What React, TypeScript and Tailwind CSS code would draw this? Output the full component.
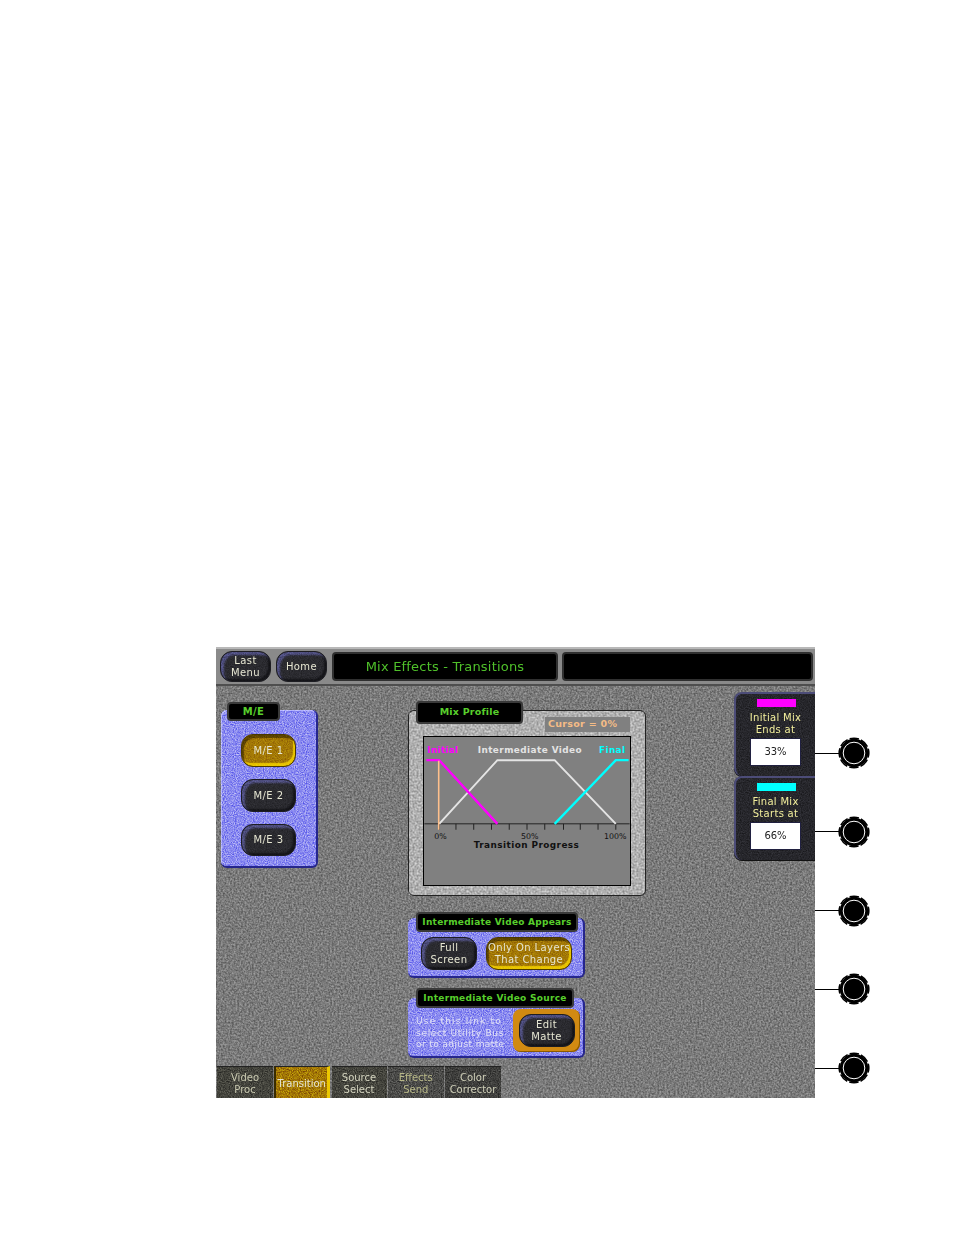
import React from "react";

function Noise({ id, freq = 0.9, o = "opacity-40" }: { id: string; freq?: number; o?: string }) {
  return (
    <svg className={`absolute inset-0 w-full h-full pointer-events-none mix-blend-overlay ${o}`} aria-hidden="true">
      <filter id={id} x="0" y="0" width="100%" height="100%" colorInterpolationFilters="sRGB">
        <feTurbulence type="fractalNoise" baseFrequency={freq} numOctaves={2} seed={3} />
        <feColorMatrix type="matrix" values="1.6 0 0 0 -0.3 1.6 0 0 0 -0.3 1.6 0 0 0 -0.3 0 0 0 0 1" />
      </filter>
      <rect width="100%" height="100%" filter={`url(#${id})`} />
    </svg>
  );
}

function Btn({ lines, gold, cls }: { lines: string[]; gold?: boolean; cls: string }) {
  const look = gold
    ? "bg-[#a27706] shadow-[inset_2px_3px_1px_#5c4300,inset_-2px_-3px_1px_#e8c400] border-[#4a3800]"
    : "bg-[#2a2a2f] shadow-[inset_3px_3px_2px_#4f4f80,inset_-2px_-2px_2px_#141418] border-[#1d1d22]";
  return (
    <div className={`relative flex flex-col items-center justify-center rounded-xl border text-[10px] leading-[12px] tracking-[0.4px] text-[#e6e6d2] overflow-hidden ${look} ${cls}`}>
      <Noise id={gold ? "ng" : "nb"} o="opacity-25" />
      {lines.map((l) => (
        <span key={l} className="relative whitespace-nowrap">{l}</span>
      ))}
    </div>
  );
}

function Plate({ text, cls }: { text: string; cls: string }) {
  return (
    <div className={`absolute z-10 flex items-center justify-center rounded bg-black border-2 border-[#3a3a3a] font-bold text-[#58cf2c] whitespace-nowrap ${cls}`}>
      {text}
    </div>
  );
}

function Knob() {
  return (
    <div className="flex items-center h-8">
      <div className="w-[25px] h-px bg-black" />
      <svg viewBox="0 0 32 32" className="w-8 h-8 -ml-[2px]" aria-hidden="true">
        <circle cx="16" cy="16" r="14.2" fill="#000" />
        <circle cx="16" cy="16" r="14.8" fill="none" stroke="#000" strokeWidth="1.6" strokeDasharray="9.4 2.2" strokeDashoffset="4.7" />
        <circle cx="16" cy="16" r="10.8" fill="none" stroke="#fff" strokeWidth="1" />
      </svg>
    </div>
  );
}

function Side({ bar, lines, value, id }: { bar: string; lines: string[]; value: string; id: string }) {
  return (
    <div className="relative w-[81px] h-[84px] bg-[#26262b] rounded-l-lg border-l-2 border-t-2 border-[#4c4c78] shadow-[0_1px_0_#111] overflow-hidden">
      <Noise id={id} o="opacity-40" />
      <div className={`relative mt-[5px] ml-[21px] w-[39px] h-2 ${bar}`} />
      <div className="relative mt-[5px] text-center text-[10px] leading-[12px] tracking-[0.3px] text-[#f2ee9c]">
        {lines.map((l) => <div key={l}>{l}</div>)}
      </div>
      <div className="relative mt-[2px] ml-[14px] w-[51px] h-[28px] bg-white border border-[#202040] flex items-center justify-center pb-px text-[10px] text-[#222]">
        {value}
      </div>
    </div>
  );
}

function Chart() {
  const ticks = [15, 32, 50, 68, 86, 104, 122, 141, 158, 176, 194];
  return (
    <svg viewBox="0 0 208 150" className="block w-[208px] h-[150px] bg-[#808080] border border-black" style={{ fontFamily: "'DejaVu Sans', sans-serif" }}>
      <line x1="0" y1="88" x2="208" y2="88" stroke="#222" strokeWidth="1" />
      {ticks.map((t) => <line key={t} x1={t} y1="88" x2={t} y2="94" stroke="#222" strokeWidth="1" />)}
      <polyline points="15,88 74,23.5 132,23.5 194,88" fill="none" stroke="#e4e4e4" strokeWidth="2" />
      <polyline points="2,23.5 15,23.5 74,88" fill="none" stroke="#ff00ff" strokeWidth="2.4" />
      <polyline points="132,88 194,23.5 207,23.5" fill="none" stroke="#00ffff" strokeWidth="2.4" />
      <line x1="14.5" y1="24" x2="14.5" y2="94" stroke="#ffc08c" strokeWidth="1.6" />
      <text x="3" y="16" fontSize="9" fontWeight="700" fill="#ff00ff" letterSpacing="0.3">Initial</text>
      <text x="54" y="16" fontSize="9" fontWeight="700" fill="#e4e4e4" letterSpacing="0.45">Intermediate Video</text>
      <text x="177" y="16" fontSize="9" fontWeight="700" fill="#00ffff" letterSpacing="0.4">Final</text>
      <text x="10" y="103" fontSize="8" fill="#111">0%</text>
      <text x="98" y="103" fontSize="8" fill="#111">50%</text>
      <text x="182" y="103" fontSize="8" fill="#111">100%</text>
      <text x="50" y="113" fontSize="9" fontWeight="700" fill="#111" letterSpacing="0.45">Transition Progress</text>
    </svg>
  );
}

const tabs = [
  { l: ["Video", "Proc"], w: "w-[56px]", c: "text-[#c9c9b0] bg-[#43433c]" },
  { l: ["Transition"], w: "w-[56px]", c: "text-[#e6e6d2] bg-[#a27706] border-r-[3px] border-r-[#ecc800] border-l-2 border-l-[#3a2c00]" },
  { l: ["Source", "Select"], w: "w-[55px]", c: "text-[#d5d5c0] bg-[#43433c]" },
  { l: ["Effects", "Send"], w: "w-[56px]", c: "text-[#b8b888] bg-[#4a4a48]" },
  { l: ["Color", "Corrector"], w: "w-[56px]", c: "text-[#cfcfb8] bg-[#3e3e3c]" },
];

export default function App() {
  return (
    <div className="min-h-[1235px] bg-white pt-[647px] pl-[216px] flex items-start font-['DejaVu_Sans',sans-serif]">
      <div className="w-[599px] h-[451px] flex flex-col overflow-hidden bg-[#7a7a7a]">
        {/* header */}
        <div className="relative h-[39px] bg-[#8a8a8a] border-t-2 border-[#b8b8b8] border-b-2 border-b-[#4e4e4e] flex items-start pl-1 pt-[2px] gap-[5px] shrink-0">
          <Btn lines={["Last", "Menu"]} cls="w-[51px] h-[31px]" />
          <Btn lines={["Home"]} cls="w-[51px] h-[31px]" />
          <div className="w-[226px] h-[29px] ml-0 mt-px rounded bg-black border-2 border-[#303030] flex items-center justify-center text-[13px] tracking-[0.2px] text-[#4fc02a]">
            Mix Effects - Transitions
          </div>
          <div className="w-[251px] h-[29px] -ml-px mt-px rounded bg-black border-2 border-[#303030]" />
        </div>

        {/* body */}
        <div className="relative flex-1 flex flex-col">
          <Noise id="nbody" freq={0.55} o="opacity-30" />
          <div className="relative h-[378px] flex items-start pl-[5px]">
            {/* M/E */}
            <div className="relative mt-[24px] w-[97px] h-[158px] rounded-md bg-[#8a8af0] border-r-2 border-b-2 border-[#26268c] shadow-[inset_1px_1px_0_#b8b8ff]">
              <Noise id="n1" o="opacity-50" />
              <Plate text="M/E" cls="-top-2 left-[6px] w-[53px] h-[19px] text-[10px] tracking-[0.4px]" />
              <div className="relative pt-[24px] pl-[20px] flex flex-col gap-3">
                <Btn lines={["M/E 1"]} gold cls="w-[55px] h-[33px]" />
                <Btn lines={["M/E 2"]} cls="w-[55px] h-[33px]" />
                <Btn lines={["M/E 3"]} cls="w-[55px] h-[32px]" />
              </div>
            </div>

            {/* centre */}
            <div className="ml-[90px] w-[238px] flex flex-col">
              <div className="relative mt-[24px] h-[186px] rounded-md bg-[#b0b0b0] border border-[#222] pl-[14px] pt-[6px]">
                <Noise id="n2" freq={0.5} o="opacity-50" />
                <Plate text="Mix Profile" cls="-top-[10px] left-[7px] w-[107px] h-[23px] text-[9.5px] tracking-[0.2px]" />
                <div className="relative ml-[122px] w-[85px] h-[15px] bg-[#808080] flex items-center justify-start pl-[3px] text-[9.5px] font-bold tracking-[0.3px] text-[#f4bc86]">
                  Cursor = 0%
                </div>
                <div className="relative mt-[4px]"><Chart /></div>
              </div>

              <div className="relative mt-[22px] w-[177px] h-[60px] rounded-md bg-[#8a8af0] border-r-2 border-b-2 border-[#26268c]">
                <Noise id="n3" o="opacity-50" />
                <Plate text="Intermediate Video Appears" cls="-top-[6px] left-[8px] w-[162px] h-[20px] pt-[2px] text-[9px] tracking-[0.25px]" />
                <div className="relative pt-[19px] pl-[13px] flex gap-[9px]">
                  <Btn lines={["Full", "Screen"]} cls="w-[56px] h-[33px]" />
                  <Btn lines={["Only On Layers", "That Change"]} gold cls="w-[86px] h-[33px]" />
                </div>
              </div>

              <div className="relative mt-[20px] w-[177px] h-[60px] rounded-md bg-[#8a8af0] border-r-2 border-b-2 border-[#26268c]">
                <Noise id="n4" o="opacity-50" />
                <Plate text="Intermediate Video Source" cls="-top-[10px] left-[8px] w-[158px] h-[20px] pt-[2px] text-[9px] tracking-[0.3px]" />
                <div className="relative flex items-start pl-2 pt-[12px]">
                  <div className="w-[92px] text-[9px] leading-[11.7px] text-[#e2e2f6] whitespace-nowrap pt-[6px]">
                    <div className="tracking-[1.2px]">Use this link to</div>
                    <div className="tracking-[0.7px]">select Utility Bus</div>
                    <div className="tracking-[0.4px]">or to adjust matte</div>
                  </div>
                  <div className="ml-[5px] -mt-[1px] w-[67px] h-[43px] rounded-lg bg-[#d18a12] shadow-[inset_-1px_-1px_0_#8a5a00] flex items-center justify-center">
                    <Btn lines={["Edit", "Matte"]} cls="w-[56px] h-[33px]" />
                  </div>
                </div>
              </div>
            </div>

            {/* right */}
            <div className="ml-auto mt-[6px] flex flex-col">
              <Side bar="bg-[#ff00ff]" lines={["Initial Mix", "Ends at"]} value="33%" id="s1" />
              <Side bar="bg-[#00ffff]" lines={["Final Mix", "Starts at"]} value="66%" id="s2" />
            </div>
          </div>

          {/* tabs */}
          <div className="relative flex gap-[1.25px] pl-px h-8 mt-auto">
            {tabs.map((t, i) => (
              <div key={i} className={`relative flex flex-col items-center justify-center pt-[2px] text-[10px] leading-[12px] border-t border-[#222] overflow-hidden whitespace-nowrap ${t.w} ${t.c}`}>
                <Noise id={`tb${i}`} o="opacity-50" />
                {t.l.map((x) => <span key={x} className="relative">{x}</span>)}
              </div>
            ))}
          </div>
        </div>
      </div>

      {/* knobs */}
      <div className="pt-[90px] flex flex-col gap-[46.75px]">
        <Knob /><Knob /><Knob /><Knob /><Knob />
      </div>
    </div>
  );
}
